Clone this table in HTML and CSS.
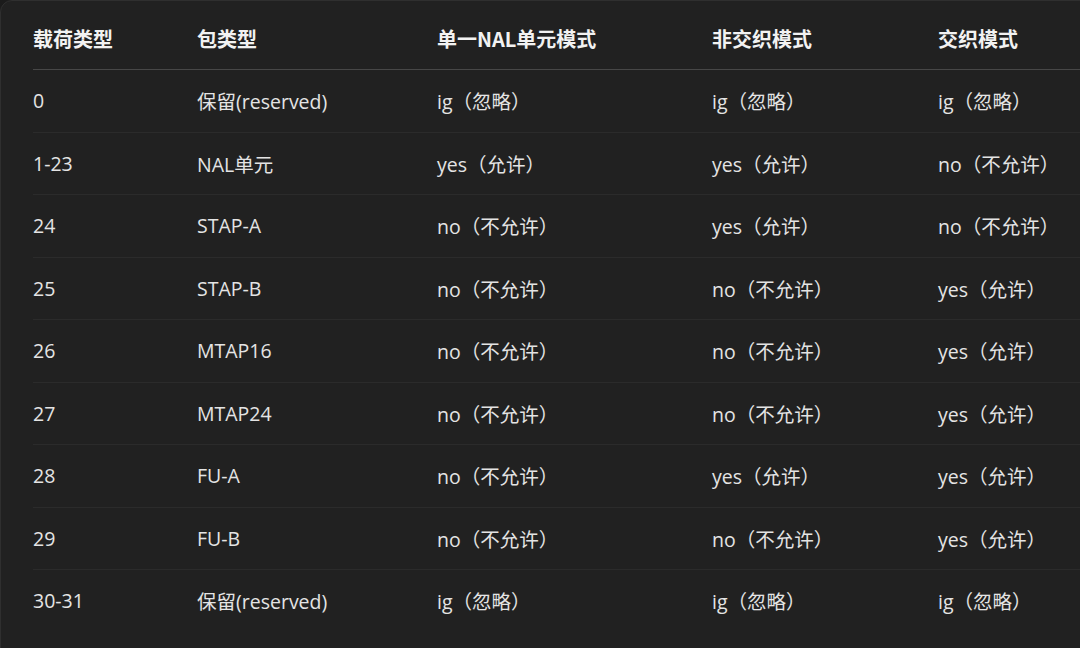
FILE: index.html
```html
<!DOCTYPE html>
<html lang="zh">
<head>
<meta charset="utf-8">
<link rel="stylesheet" href="styles.css">
</head>
<body>
<div class="panel">
  <table class="tbl">
    <colgroup>
      <col class="c1"><col class="c2"><col class="c3"><col class="c4"><col class="c5">
    </colgroup>
    <thead>
      <tr><th>载荷类型</th><th>包类型</th><th>单一NAL单元模式</th><th>非交织模式</th><th>交织模式</th></tr>
    </thead>
    <tbody>
      <tr><td>0</td><td>保留(reserved)</td><td>ig（忽略）</td><td>ig（忽略）</td><td>ig（忽略）</td></tr>
      <tr><td>1-23</td><td>NAL单元</td><td>yes（允许）</td><td>yes（允许）</td><td>no（不允许）</td></tr>
      <tr><td>24</td><td>STAP-A</td><td>no（不允许）</td><td>yes（允许）</td><td>no（不允许）</td></tr>
      <tr><td>25</td><td>STAP-B</td><td>no（不允许）</td><td>no（不允许）</td><td>yes（允许）</td></tr>
      <tr><td>26</td><td>MTAP16</td><td>no（不允许）</td><td>no（不允许）</td><td>yes（允许）</td></tr>
      <tr><td>27</td><td>MTAP24</td><td>no（不允许）</td><td>no（不允许）</td><td>yes（允许）</td></tr>
      <tr><td>28</td><td>FU-A</td><td>no（不允许）</td><td>yes（允许）</td><td>yes（允许）</td></tr>
      <tr><td>29</td><td>FU-B</td><td>no（不允许）</td><td>no（不允许）</td><td>yes（允许）</td></tr>
      <tr><td>30-31</td><td>保留(reserved)</td><td>ig（忽略）</td><td>ig（忽略）</td><td>ig（忽略）</td></tr>
    </tbody>
  </table>
</div>
</body>
</html>
```

FILE: styles.css
```css
html, body {
  margin: 0;
  padding: 0;
  background: #1b1b1b;
  overflow: hidden;
  width: 1080px;
  height: 648px;
}

.panel {
  box-sizing: border-box;
  width: 1240px;
  height: 700px;
  background: #212121;
  border: 1px solid #2f2f2f;
  border-radius: 12px;
  padding: 6px 0 0 32px;
  overflow: hidden;
}

.tbl {
  border-collapse: collapse;
  table-layout: fixed;
  width: 1160px;
  font-family: "Open Sans", "Noto Sans CJK SC", sans-serif;
  font-size: 19.5px;
  color: #e4e4e4;
}

.c1 { width: 164px; }
.c2 { width: 240px; }
.c3 { width: 275px; }
.c4 { width: 226px; }
.c5 { width: 255px; }

.tbl th {
  text-align: left;
  font-weight: 700;
  color: #f2f2f2;
  height: 62px;
  padding: 0;
  vertical-align: middle;
  border-bottom: 1px solid #474747;
  font-family: "Noto Sans CJK SC", "Open Sans", sans-serif;
  font-size: 20px;
}

.tbl td {
  padding: 0;
  height: 61.5px;
  vertical-align: middle;
  white-space: nowrap;
}

.tbl tbody tr + tr td {
  border-top: 1px solid #2b2b2b;
}
```
